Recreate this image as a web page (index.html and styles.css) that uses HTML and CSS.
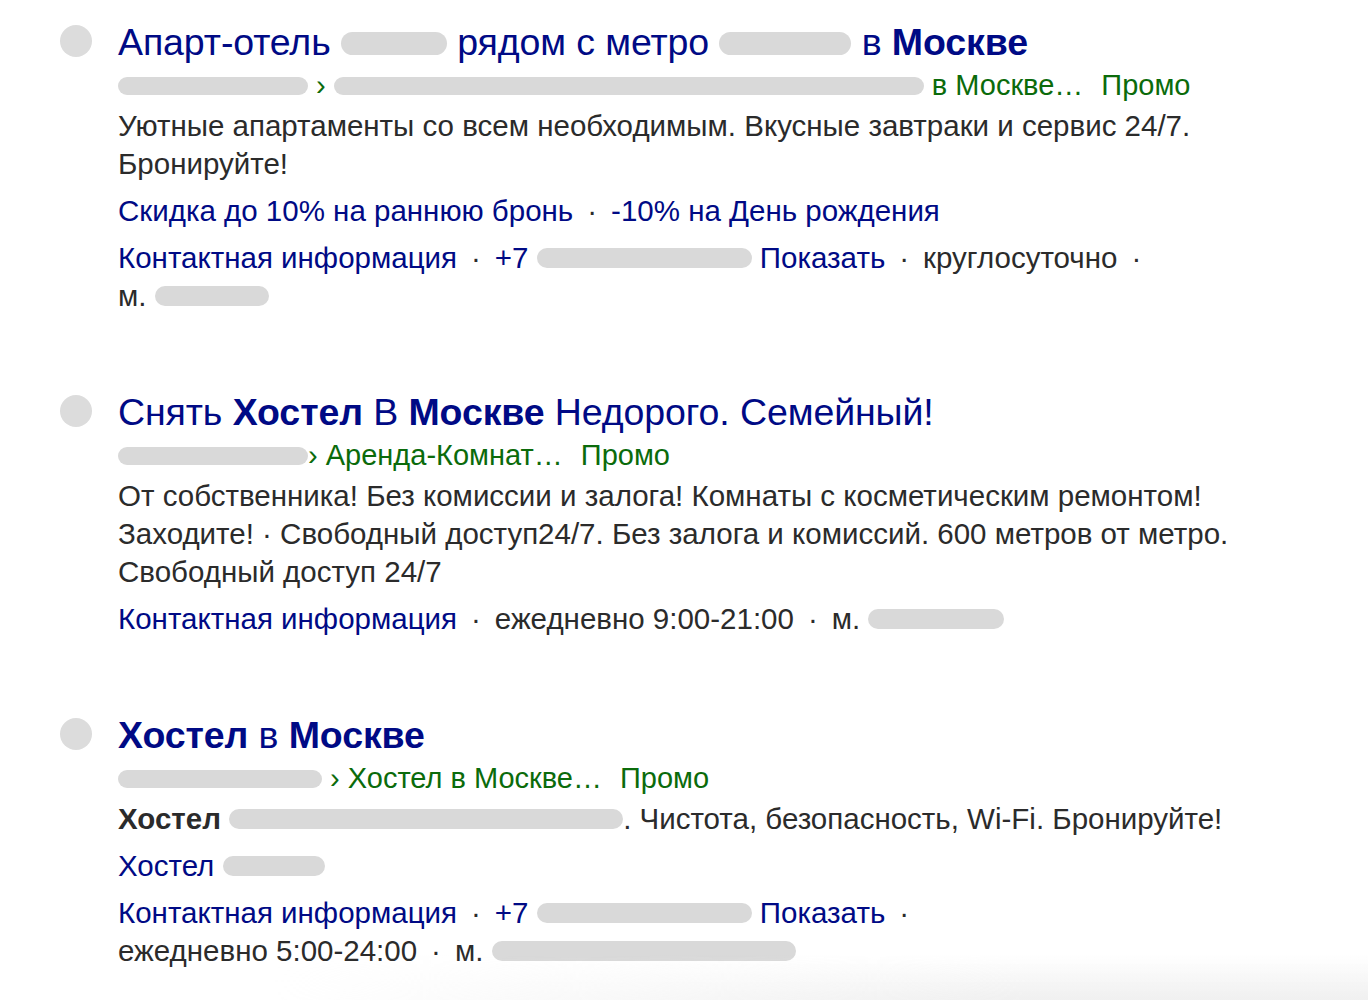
FILE: index.html
```html
<!DOCTYPE html>
<html lang="ru">
<head>
<meta charset="utf-8">
<title>Хостел в Москве</title>
<link rel="stylesheet" href="styles.css">
</head>
<body>
<main class="serp">

  <article class="item">
    <span class="bullet"></span>
    <div class="body">
      <h2 class="title"><a href="#">Апарт-отель <span class="pill pill-title w106"></span> рядом с метро <span class="pill pill-title w132"></span> в <b>Москве</b></a></h2>
      <div class="path"><span class="pill pill-url w190"></span> › <span class="pill pill-url w590"></span> в Москве…<span class="promo">Промо</span></div>
      <p class="text">Уютные апартаменты со всем необходимым. Вкусные завтраки и сервис 24/7.<br>Бронируйте!</p>
      <div class="links"><a href="#">Скидка до 10% на раннюю бронь</a><span class="sep">·</span><a href="#">-10% на День рождения</a></div>
      <div class="meta"><a href="#">Контактная информация</a><span class="sep">·</span><a href="#">+7 <span class="pill pill-meta w215"></span> Показать</a><span class="sep">·</span>круглосуточно<span class="sep">·</span><br>м. <span class="pill pill-meta w114"></span></div>
    </div>
  </article>

  <article class="item">
    <span class="bullet"></span>
    <div class="body">
      <h2 class="title"><a href="#">Снять <b>Хостел</b> В <b>Москве</b> Недорого. Семейный!</a></h2>
      <div class="path"><span class="pill pill-url w190"></span>› Аренда-Комнат…<span class="promo">Промо</span></div>
      <p class="text">От собственника! Без комиссии и залога! Комнаты с косметическим ремонтом!<br>Заходите! · Свободный доступ24/7. Без залога и комиссий. 600 метров от метро.<br>Свободный доступ 24/7</p>
      <div class="meta"><a href="#">Контактная информация</a><span class="sep">·</span>ежедневно 9:00-21:00<span class="sep">·</span>м. <span class="pill pill-meta w136"></span></div>
    </div>
  </article>

  <article class="item">
    <span class="bullet"></span>
    <div class="body">
      <h2 class="title"><a href="#"><b>Хостел</b> в <b>Москве</b></a></h2>
      <div class="path"><span class="pill pill-url w204"></span> › Хостел в Москве…<span class="promo">Промо</span></div>
      <p class="text"><b>Хостел</b> <span class="pill pill-meta w394"></span>. Чистота, безопасность, Wi-Fi. Бронируйте!</p>
      <div class="links"><a href="#">Хостел <span class="pill pill-meta w102"></span></a></div>
      <div class="meta"><a href="#">Контактная информация</a><span class="sep">·</span><a href="#">+7 <span class="pill pill-meta w215"></span> Показать</a><span class="sep">·</span><br>ежедневно 5:00-24:00<span class="sep">·</span>м. <span class="pill pill-meta w304"></span></div>
    </div>
  </article>

</main>
<div class="fade"></div>
</body>
</html>
```

FILE: styles.css
```css
html, body {
  margin: 0;
  background: #fff;
}

body {
  font-family: "Liberation Sans", Arial, sans-serif;
  color: #2b2b2b;
}

.serp {
  padding: 20px 0 0 60px;
  display: flex;
  flex-direction: column;
  gap: 75px;
}

.item {
  display: grid;
  grid-template-columns: 58px 1fr;
  align-items: start;
}

.bullet {
  width: 32px;
  height: 32px;
  margin-top: 5px;
  border-radius: 50%;
  background: #dcdcdc;
}

.body {
  max-width: 1150px;
}

a {
  color: #000a85;
  text-decoration: none;
}

.title {
  margin: 0;
  font-size: 37.5px;
  line-height: 44px;
  font-weight: 400;
  letter-spacing: -0.1px;
}

.title b {
  font-weight: 700;
}

.path {
  font-size: 29px;
  line-height: 43px;
  color: #0b6b0b;
  white-space: nowrap;
}

.promo {
  margin-left: 18px;
}

.text {
  margin: 0;
  font-size: 29.5px;
  line-height: 38px;
}

.text b {
  font-weight: 700;
}

.links,
.meta {
  margin-top: 9px;
  font-size: 29.5px;
  line-height: 38px;
}

.sep {
  margin: 0 14px;
  color: #2b2b2b;
}

/* grey placeholders standing in for hidden fragments */
.pill {
  display: inline-block;
  border-radius: 12px;
  background: #d9d9d9;
  vertical-align: 0;
}

.pill-title { height: 23px; }
.pill-url   { height: 18px; }
.pill-meta  { height: 20px; }

.w102 { width: 102px; }
.w106 { width: 106px; }
.w114 { width: 114px; }
.w132 { width: 132px; }
.w136 { width: 136px; }
.w190 { width: 190px; }
.w204 { width: 204px; }
.w215 { width: 215px; }
.w304 { width: 304px; }
.w394 { width: 394px; }
.w590 { width: 590px; }

/* soft grey haze along the lower edge, stronger to the right */
.fade {
  position: fixed;
  left: 0;
  right: 0;
  bottom: 0;
  height: 45px;
  background: linear-gradient(to bottom, rgba(238, 238, 238, 0), rgba(238, 238, 238, 0.9));
  -webkit-mask-image: linear-gradient(to right, transparent 20%, #000 75%);
  mask-image: linear-gradient(to right, transparent 20%, #000 75%);
  pointer-events: none;
}
```
